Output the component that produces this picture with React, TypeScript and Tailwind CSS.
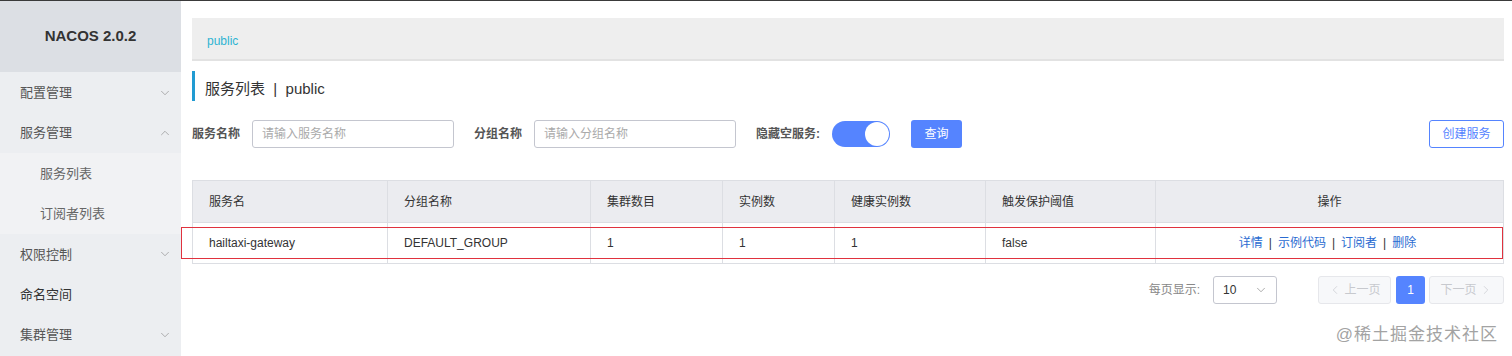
import { ChevronDown, ChevronUp, ChevronLeft, ChevronRight } from 'lucide-react';

const font = { fontFamily: '"Liberation Sans", "Noto Sans CJK SC", sans-serif' };

const menu = [
  { label: '配置管理', arrow: 'down' },
  { label: '服务管理', arrow: 'up' },
  { label: '服务列表', sub: true },
  { label: '订阅者列表', sub: true },
  { label: '权限控制', arrow: 'down' },
  { label: '命名空间', dark: true },
  { label: '集群管理', arrow: 'down' },
];

const cols = [
  { title: '服务名', w: 'w-[195px]' },
  { title: '分组名称', w: 'w-[203px]' },
  { title: '集群数目', w: 'w-[132px]' },
  { title: '实例数', w: 'w-[112px]' },
  { title: '健康实例数', w: 'w-[151px]' },
  { title: '触发保护阈值', w: 'w-[170px]' },
];

const row = ['hailtaxi-gateway', 'DEFAULT_GROUP', '1', '1', '1', 'false'];

function Sidebar() {
  return (
    <div className="w-[181px] shrink-0 bg-[#eceef1] h-[355px]">
      <div className="h-[71px] bg-[#dcdfe4] flex items-center justify-center text-[15px] font-bold text-[#333]">
        NACOS 2.0.2
      </div>
      {menu.map((m) => (
        <div
          key={m.label}
          className={`h-[40.4px] flex items-center justify-between pr-[9px] pt-[1px] text-[13px] ${
            m.sub ? 'bg-[#f1f2f4] pl-[40px] text-[#666]' : 'pl-[20px]'
          } ${m.dark ? 'text-[#333]' : m.sub ? '' : 'text-[#555]'}`}
        >
          <span>{m.label}</span>
          {m.arrow === 'down' && <ChevronDown size={14} strokeWidth={1.1} className="text-[#888]" />}
          {m.arrow === 'up' && <ChevronUp size={14} strokeWidth={1.1} className="text-[#888]" />}
        </div>
      ))}
    </div>
  );
}

export default function App() {
  return (
    <div className="w-[1512px] h-[356px] overflow-hidden bg-white border-t border-[#3a3a3a] flex" style={font}>
      <Sidebar />
      <div className="flex-1 pl-[11px] pr-[8px] relative">
        <div className="mt-[17px] h-[43px] bg-[#eeeeee] border-b-2 border-[#e2e2e2] flex items-center pl-[15px] pt-[4px] text-[12px] text-[#2fb4d2]">
          public
        </div>

        <div className="mt-[10px] h-[30px] border-l-[3px] border-[#219bd2] flex items-center pl-[10px] pt-[6px] text-[15px] text-[#333]">
          服务列表&nbsp;&nbsp;|&nbsp;&nbsp;public
        </div>

        <div className="mt-[19px] h-[28px] flex items-center text-[12px]">
          <span className="font-bold text-[#555] w-[60px]">服务名称</span>
          <div className="w-[202px] h-[28px] border border-[#c4c6cf] rounded-[3px] flex items-center pl-[9px] text-[#aaa]">
            请输入服务名称
          </div>
          <span className="font-bold text-[#555] ml-[20px] w-[60px]">分组名称</span>
          <div className="w-[202px] h-[28px] border border-[#c4c6cf] rounded-[3px] flex items-center pl-[9px] text-[#aaa]">
            请输入分组名称
          </div>
          <span className="font-bold text-[#555] ml-[20px] w-[76px]">隐藏空服务:</span>
          <div className="w-[58px] h-[26px] rounded-full bg-[#5584ff] relative">
            <div className="absolute right-[1px] top-[1px] w-[24px] h-[24px] rounded-full bg-white" />
          </div>
          <div className="ml-[21px] w-[51px] h-[28px] rounded-[3px] bg-[#5584ff] text-white flex items-center justify-center">
            查询
          </div>
          <div className="ml-auto w-[75px] h-[28px] rounded-[3px] border border-[#5584ff] text-[#5584ff] flex items-center justify-center">
            创建服务
          </div>
        </div>

        <div className="mt-[32px] border border-[#dcdee3] text-[12px] text-[#333]">
          <div className="flex h-[42px] bg-[#ebecf0] border-b border-[#dcdee3]">
            {cols.map((c) => (
              <div key={c.title} className={`${c.w} border-r border-[#dcdee3] flex items-center pl-[16px]`}>
                {c.title}
              </div>
            ))}
            <div className="flex-1 flex items-center justify-center">操作</div>
          </div>
          <div className="flex h-[40px]">
            {row.map((v, i) => (
              <div key={i} className={`${cols[i].w} border-r border-[#dcdee3] flex items-center pl-[16px]`}>
                {v}
              </div>
            ))}
            <div className="flex-1 flex items-center justify-center text-[#2a6bd1] gap-[6px] pr-[4px]">
              <span>详情</span>
              <span className="text-[#333]">|</span>
              <span>示例代码</span>
              <span className="text-[#333]">|</span>
              <span>订阅者</span>
              <span className="text-[#333]">|</span>
              <span>删除</span>
            </div>
          </div>
        </div>

        <div className="absolute left-0 right-[9px] top-[226px] h-[32px] border border-[#e0323e] pointer-events-none" />

        <div className="mt-[12px] h-[28px] flex items-center justify-end text-[12px]">
          <span className="text-[#888] mr-[13px]">每页显示:</span>
          <div className="w-[64px] h-[28px] border border-[#c4c6cf] rounded-[3px] flex items-center justify-between pl-[9px] pr-[8px] text-[#333]">
            <span>10</span>
            <ChevronDown size={14} strokeWidth={1.2} className="text-[#888]" />
          </div>
          <div className="ml-[41px] w-[73px] h-[28px] rounded-[3px] border border-[#e6e7eb] bg-[#f7f8fa] text-[#c7c9ce] flex items-center justify-center gap-[2px]">
            <ChevronLeft size={14} strokeWidth={1.2} />
            <span>上一页</span>
          </div>
          <div className="ml-[5px] w-[29px] h-[28px] rounded-[3px] bg-[#5584ff] text-white flex items-center justify-center">
            1
          </div>
          <div className="ml-[4px] w-[75px] h-[28px] rounded-[3px] border border-[#e6e7eb] bg-[#f7f8fa] text-[#c7c9ce] flex items-center justify-center gap-[2px]">
            <span>下一页</span>
            <ChevronRight size={14} strokeWidth={1.2} />
          </div>
        </div>

        <div className="mt-[18px] flex justify-end pr-[6px] text-[17px] text-[#a3a3a3] tracking-[1px]">
          @稀土掘金技术社区
        </div>
      </div>
    </div>
  );
}
